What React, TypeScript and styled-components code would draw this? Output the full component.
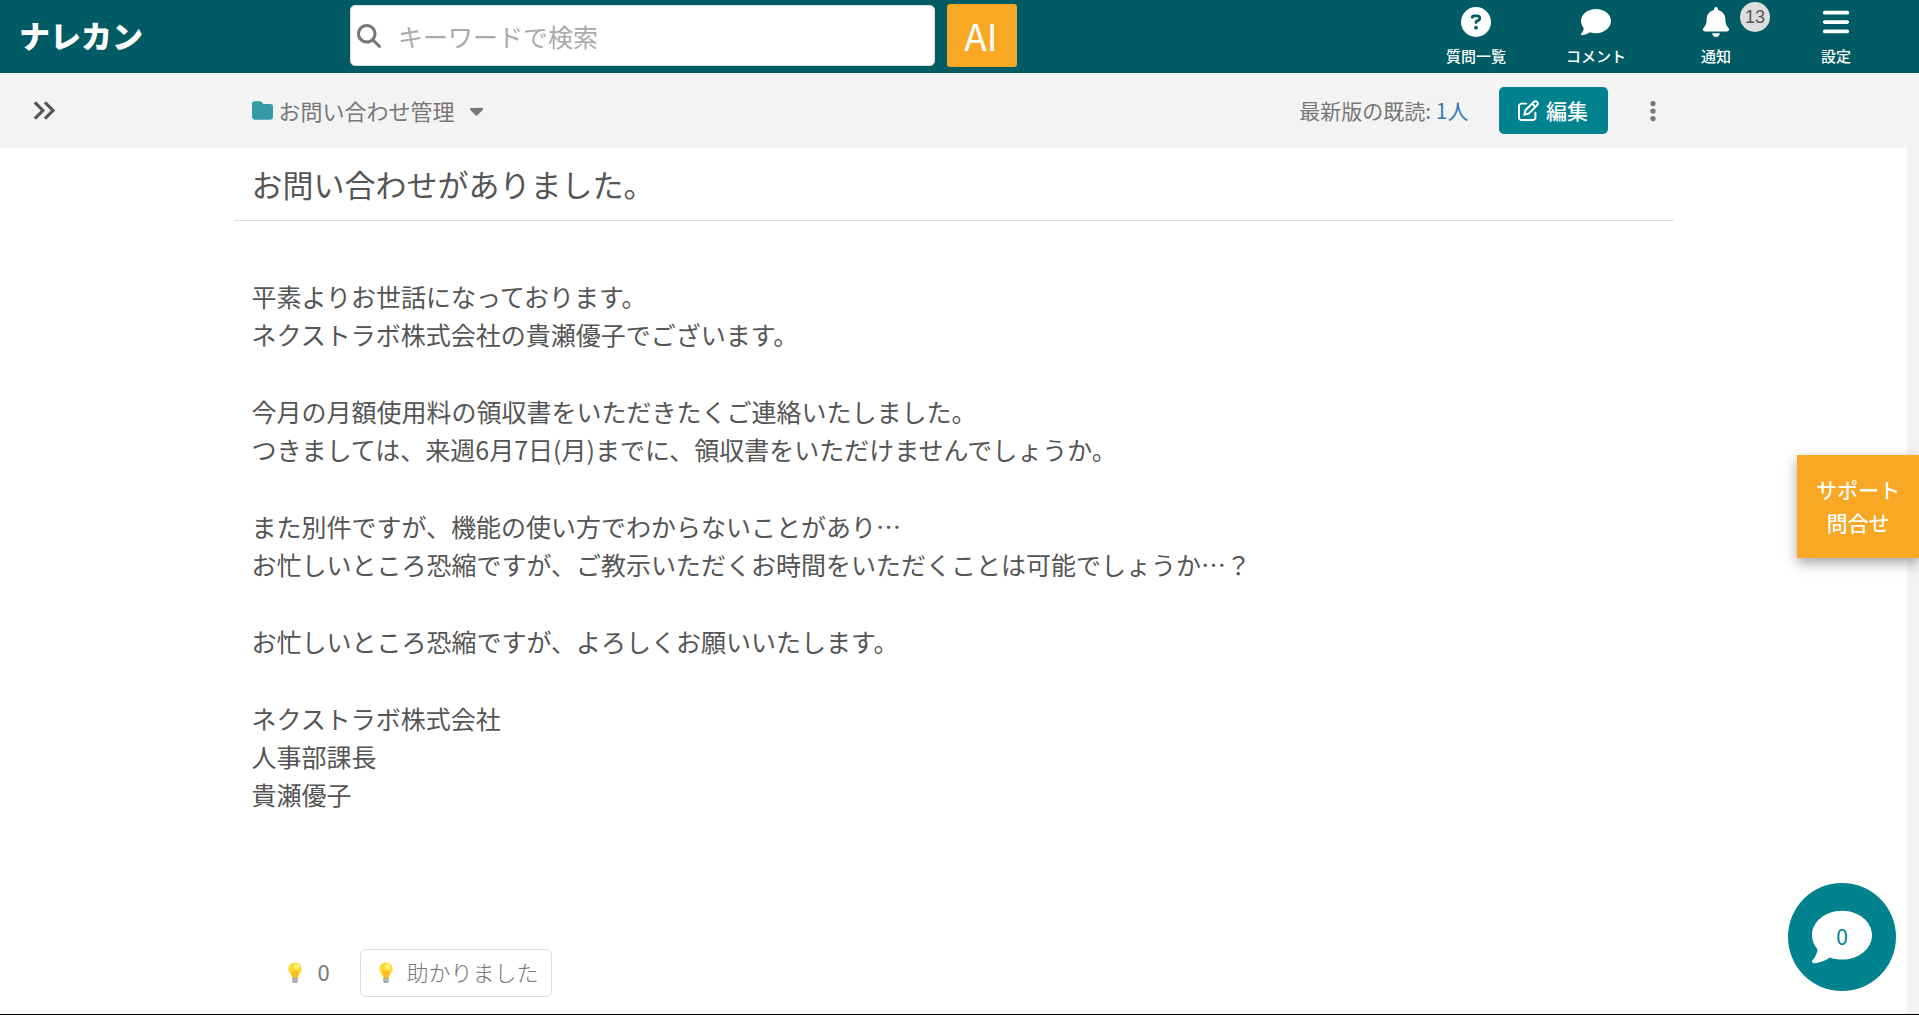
import React from "react";
import styled, { createGlobalStyle } from "styled-components";
import {
  FaBars,
  FaBell,
  FaCaretDown,
  FaCircleQuestion,
  FaComment,
  FaEllipsisVertical,
  FaFolder,
  FaMagnifyingGlass,
  FaRegPenToSquare,
} from "react-icons/fa6";
import { MdKeyboardDoubleArrowRight } from "react-icons/md";

const color = {
  header: "#005b64",
  primary: "#00838f",
  accent: "#f9a825",
  bar: "#f3f3f3",
  line: "#dddddd",
  text: "#555555",
  muted: "#777777",
  link: "#337ab7",
};

const GlobalStyle = createGlobalStyle`
  *, *::before, *::after { box-sizing: border-box; }
  body {
    margin: 0;
    color: ${color.text};
    font-family: "Noto Sans CJK JP", "Noto Sans", sans-serif;
    font-size: 25px;
  }
  button, input { font-family: inherit; }
  button { cursor: pointer; }
  svg { display: block; flex: none; }
`;

const Page = styled.div`
  display: flex;
  flex-direction: column;
  min-height: 100vh;
  border-bottom: 1px solid #000;
`;

const Header = styled.header`
  display: flex;
  align-items: center;
  height: 73px;
  padding: 0 23px 2px 19px;
  background: ${color.header};
`;

const Logo = styled.a`
  flex: 0 0 331px;
  padding-bottom: 2px;
  color: #fff;
  font-size: 31px;
  font-weight: 900;
  line-height: 40px;
  text-decoration: none;
`;

const SearchBox = styled.label`
  display: flex;
  align-items: center;
  gap: 17px;
  flex: 0 1 585px;
  height: 61px;
  padding: 0 6px;
  border: 1px solid ${color.line};
  border-radius: 5px;
  background: #fff;
  color: ${color.muted};
`;

const SearchInput = styled.input`
  flex: 1;
  min-width: 0;
  height: 48px;
  padding: 0;
  border: 0;
  outline: 0;
  background: transparent;
  color: ${color.text};
  font-size: 25px;

  &::placeholder {
    color: #aaa;
    opacity: 1;
  }
`;

const AiButton = styled.button`
  width: 70px;
  height: 63px;
  margin-left: 12px;
  padding: 0 2px 2px 0;
  border: 0;
  border-radius: 3px;
  background: ${color.accent};
  color: #fff;
  font-size: 37px;
  line-height: 60px;
`;

const Nav = styled.nav`
  display: flex;
  margin-left: auto;
  padding-top: 2px;
`;

const NavButton = styled.button`
  position: relative;
  display: flex;
  flex-direction: column;
  align-items: center;
  gap: 9px;
  width: 120px;
  padding: 0;
  border: 0;
  background: none;
  color: #fff;
  font-size: 15px;
  font-weight: 500;
  line-height: 20px;
`;

const Badge = styled.span`
  position: absolute;
  top: -5px;
  left: 84px;
  width: 30px;
  height: 30px;
  border-radius: 50%;
  background: ${color.line};
  color: ${color.text};
  font-family: "Liberation Sans", Arial, sans-serif;
  font-size: 18px;
  font-weight: 400;
  line-height: 30px;
  text-align: center;
`;

const Body = styled.div`
  display: flex;
  flex-direction: column;
  flex: 1;
  padding-right: 12px;
  background: ${color.bar};
`;

const Columns = styled.div`
  display: grid;
  grid-template-columns: minmax(60px, 1fr) minmax(0, 1440px) minmax(0, 1fr);
`;

const Toolbar = styled(Columns)`
  align-items: center;
  height: 75px;
`;

const ToolbarInner = styled.div`
  display: flex;
  align-items: center;
  padding-left: 18px;
  color: ${color.muted};
  font-size: 21px;
`;

const ToolbarLabel = styled.span`
  padding-bottom: 2px;
`;

const PlainButton = styled.button`
  display: flex;
  align-items: center;
  padding: 0;
  border: 0;
  background: none;
  color: ${color.muted};
  font-size: inherit;
`;

const ExpandButton = styled(PlainButton)`
  margin-left: 26px;
  color: ${color.text};
`;

const FolderButton = styled(PlainButton)`
  gap: 6px;
  font-size: 22px;
`;

const FolderIcon = styled(FaFolder)`
  color: #339ba5;
`;

const FolderCaret = styled(FaCaretDown)`
  margin-left: 5px;
`;

const ReadStatus = styled(ToolbarLabel)`
  margin-left: auto;
`;

const ReadLink = styled.a`
  color: ${color.link};
  text-decoration: none;
`;

const EditButton = styled.button`
  display: flex;
  align-items: center;
  justify-content: center;
  gap: 7px;
  width: 109px;
  height: 47px;
  margin-left: 30px;
  padding: 0;
  border: 0;
  border-radius: 5px;
  background: ${color.primary};
  color: #fff;
  font-size: 21px;
  font-weight: 500;
`;

const MenuButton = styled(PlainButton)`
  justify-content: center;
  width: 42px;
  height: 42px;
  margin-left: 24px;
`;

const Main = styled.main`
  flex: 1;
  background: #fff;
`;

const Article = styled.article`
  grid-column: 2;
`;

const Title = styled.h1`
  margin: 0;
  padding: 14px 18px;
  border-bottom: 1px solid ${color.line};
  font-size: 31px;
  font-weight: 400;
  line-height: 44px;
`;

const Message = styled.div`
  display: flex;
  flex-direction: column;
  gap: 39px;
  padding: 56px 18px 0;
  line-height: 38px;
`;

const Paragraph = styled.p`
  margin: 0;
`;

const Reactions = styled.footer`
  display: flex;
  align-items: center;
  margin-top: 136px;
  padding: 0 0 16px 54px;
  color: ${color.muted};
  font-size: 22px;
`;

const ReactionCount = styled.span`
  display: flex;
  align-items: center;
  gap: 16px;
  width: 72px;
`;

const ReactionLabel = styled.span`
  padding-bottom: 4px;
`;

const ThanksButton = styled.button`
  display: flex;
  align-items: center;
  gap: 14px;
  height: 48px;
  padding: 0 12px 0 18px;
  border: 1px solid ${color.line};
  border-radius: 6px;
  background: #fff;
  color: ${color.muted};
  font-size: 22px;
  font-weight: 300;
`;

const SupportButton = styled.button`
  position: fixed;
  top: 455px;
  right: 0;
  width: 122px;
  height: 103px;
  padding: 0 0 2px;
  border: 0;
  background: ${color.accent};
  box-shadow: 0 5px 12px rgba(0, 0, 0, 0.35);
  color: #fff;
  font-size: 21px;
  font-weight: 500;
  line-height: 33px;
`;

const ChatButton = styled.button`
  position: fixed;
  right: 23px;
  bottom: 24px;
  display: grid;
  place-items: center;
  width: 108px;
  height: 108px;
  padding: 0;
  border: 0;
  border-radius: 50%;
  background: ${color.primary};
  color: #fff;

  > * {
    grid-area: 1 / 1;
  }
`;

const ChatCount = styled.span`
  padding-bottom: 2px;
  color: ${color.primary};
  font-size: 21px;
  line-height: 30px;
`;

function Bulb() {
  return (
    <svg width="14" height="22" viewBox="0 0 14 22" aria-hidden="true">
      <path
        d="M7 .5C3.300.5.4 3.300.4 6.900c0 2.300 1.100 3.900 2.200 5.500.8 1.200 1.300 2.300 1.500 3.600h5.800c.2-1.300.7-2.400 1.500-3.600 1.100-1.600 2.200-3.200 2.200-5.500C13.600 3.300 10.700.5 7 .5Z"
        fill="#fdd835"
      />
      <path
        d="M5.600 16 4.500 9.200l1.300 1 1.200-1 1.200 1 1.300-1L8.400 16"
        fill="#fbc02d"
        stroke="#f2a600"
        strokeWidth=".8"
        strokeLinejoin="round"
      />
      <ellipse cx="8.600" cy="4.600" rx="2.800" ry="2.600" fill="#fff176" />
      <path d="M4.200 16h5.600v3.600L8.600 21H5.400l-1.200-1.400Z" fill="#9e9e9e" />
      <path d="M4.200 17.200h5.600M4.200 19h5.600" stroke="#c9ced1" strokeWidth=".8" />
    </svg>
  );
}

const navItems = [
  { label: "質問一覧", Icon: FaCircleQuestion },
  { label: "コメント", Icon: FaComment },
  { label: "通知", Icon: FaBell, badge: 13 },
  { label: "設定", Icon: FaBars },
];

const paragraphs = [
  ["平素よりお世話になっております。", "ネクストラボ株式会社の貴瀬優子でございます。"],
  [
    "今月の月額使用料の領収書をいただきたくご連絡いたしました。",
    "つきましては、来週6月7日(月)までに、領収書をいただけませんでしょうか。",
  ],
  [
    "また別件ですが、機能の使い方でわからないことがあり…",
    "お忙しいところ恐縮ですが、ご教示いただくお時間をいただくことは可能でしょうか…？",
  ],
  ["お忙しいところ恐縮ですが、よろしくお願いいたします。"],
  ["ネクストラボ株式会社", "人事部課長", "貴瀬優子"],
];

export default function App() {
  return (
    <Page lang="ja">
      <GlobalStyle />
      <Header>
        <Logo href="#">ナレカン</Logo>
        <SearchBox>
          <FaMagnifyingGlass size={24} aria-hidden="true" />
          <SearchInput type="search" aria-label="キーワードで検索" placeholder="キーワードで検索" />
        </SearchBox>
        <AiButton type="button">AI</AiButton>
        <Nav>
          {navItems.map(({ label, Icon, badge }) => (
            <NavButton type="button" key={label}>
              <Icon size={30} aria-hidden="true" />
              {label}
              {badge && <Badge>{badge}</Badge>}
            </NavButton>
          ))}
        </Nav>
      </Header>

      <Body>
        <Toolbar>
          <ExpandButton type="button" aria-label="サイドバーを開く">
            <MdKeyboardDoubleArrowRight size={37} />
          </ExpandButton>
          <ToolbarInner>
            <FolderButton type="button">
              <FolderIcon size={21} />
              <ToolbarLabel>お問い合わせ管理</ToolbarLabel>
              <FolderCaret size={21} />
            </FolderButton>
            <ReadStatus>
              最新版の既読: <ReadLink href="#">1人</ReadLink>
            </ReadStatus>
            <EditButton type="button">
              <FaRegPenToSquare size={21} />
              <ToolbarLabel>編集</ToolbarLabel>
            </EditButton>
            <MenuButton type="button" aria-label="メニュー">
              <FaEllipsisVertical size={24} />
            </MenuButton>
          </ToolbarInner>
        </Toolbar>

        <Main>
          <Columns>
            <Article>
              <Title>お問い合わせがありました。</Title>
              <Message>
                {paragraphs.map((lines, index) => (
                  <Paragraph key={index}>
                    {lines.map((line, n) => (
                      <React.Fragment key={line}>
                        {n > 0 && <br />}
                        {line}
                      </React.Fragment>
                    ))}
                  </Paragraph>
                ))}
              </Message>
              <Reactions>
                <ReactionCount>
                  <Bulb />
                  <ReactionLabel>0</ReactionLabel>
                </ReactionCount>
                <ThanksButton type="button">
                  <Bulb />
                  <ReactionLabel>助かりました</ReactionLabel>
                </ThanksButton>
              </Reactions>
            </Article>
          </Columns>
        </Main>
      </Body>

      <SupportButton type="button">
        サポート
        <br />
        問合せ
      </SupportButton>
      <ChatButton type="button" aria-label="チャット">
        <FaComment size={60} />
        <ChatCount>0</ChatCount>
      </ChatButton>
    </Page>
  );
}
